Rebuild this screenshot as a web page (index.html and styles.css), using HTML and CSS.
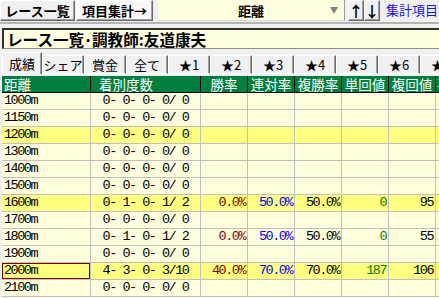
FILE: index.html
```html
<!DOCTYPE html>
<html lang="ja">
<head>
<meta charset="utf-8">
<title>レース一覧</title>
<link rel="stylesheet" href="styles.css">
</head>
<body>
<div class="topbar">
  <div class="btn btn-main">レース一覧</div>
  <div class="btn btn-sub">項目集計→</div>
  <div class="select"><span class="select-text">距離</span><span class="select-arrow"></span></div>
  <div class="btn btn-arrow btn-up">↑</div>
  <div class="btn btn-arrow">↓</div>
  <span class="link">集計項目&gt;</span>
</div>
<div class="title">レース一覧･調教師:友道康夫</div>
<div class="tabs">
  <div class="tab tab-active">成績</div>
  <div class="tab">シェア</div>
  <div class="tab">賞金</div>
  <div class="tab">全て</div>
  <div class="tab">★1</div>
  <div class="tab">★2</div>
  <div class="tab">★3</div>
  <div class="tab">★4</div>
  <div class="tab">★5</div>
  <div class="tab">★6</div>
  <div class="tab">★7</div>
</div>
<div class="grid">
  <div class="row head">
    <div class="c c1">距離</div><div class="c c2">着別度数</div><div class="c">勝率</div><div class="c">連対率</div><div class="c">複勝率</div><div class="c">単回値</div><div class="c">複回値</div><div class="c c8">平均</div>
  </div>
  <div class="row"><div class="c c1 m">1000m</div><div class="c c2 m">0- 0- 0- 0/ 0</div><div class="c"></div><div class="c"></div><div class="c"></div><div class="c"></div><div class="c"></div><div class="c"></div></div>
  <div class="row"><div class="c c1 m">1150m</div><div class="c c2 m">0- 0- 0- 0/ 0</div><div class="c"></div><div class="c"></div><div class="c"></div><div class="c"></div><div class="c"></div><div class="c"></div></div>
  <div class="row hl"><div class="c c1 m">1200m</div><div class="c c2 m">0- 0- 0- 0/ 0</div><div class="c"></div><div class="c"></div><div class="c"></div><div class="c"></div><div class="c"></div><div class="c"></div></div>
  <div class="row"><div class="c c1 m">1300m</div><div class="c c2 m">0- 0- 0- 0/ 0</div><div class="c"></div><div class="c"></div><div class="c"></div><div class="c"></div><div class="c"></div><div class="c"></div></div>
  <div class="row"><div class="c c1 m">1400m</div><div class="c c2 m">0- 0- 0- 0/ 0</div><div class="c"></div><div class="c"></div><div class="c"></div><div class="c"></div><div class="c"></div><div class="c"></div></div>
  <div class="row"><div class="c c1 m">1500m</div><div class="c c2 m">0- 0- 0- 0/ 0</div><div class="c"></div><div class="c"></div><div class="c"></div><div class="c"></div><div class="c"></div><div class="c"></div></div>
  <div class="row hl"><div class="c c1 m">1600m</div><div class="c c2 m">0- 1- 0- 1/ 2</div><div class="c m num red">0.0%</div><div class="c m num blue">50.0%</div><div class="c m num">50.0%</div><div class="c m num green">0</div><div class="c m num">95</div><div class="c"></div></div>
  <div class="row"><div class="c c1 m">1700m</div><div class="c c2 m">0- 0- 0- 0/ 0</div><div class="c"></div><div class="c"></div><div class="c"></div><div class="c"></div><div class="c"></div><div class="c"></div></div>
  <div class="row"><div class="c c1 m">1800m</div><div class="c c2 m">0- 1- 0- 1/ 2</div><div class="c m num red">0.0%</div><div class="c m num blue">50.0%</div><div class="c m num">50.0%</div><div class="c m num green">0</div><div class="c m num">55</div><div class="c"></div></div>
  <div class="row"><div class="c c1 m">1900m</div><div class="c c2 m">0- 0- 0- 0/ 0</div><div class="c"></div><div class="c"></div><div class="c"></div><div class="c"></div><div class="c"></div><div class="c"></div></div>
  <div class="row hl"><div class="c c1 m sel">2000m</div><div class="c c2 m">4- 3- 0- 3/10</div><div class="c m num red">40.0%</div><div class="c m num blue">70.0%</div><div class="c m num">70.0%</div><div class="c m num green">187</div><div class="c m num">106</div><div class="c"></div></div>
  <div class="row"><div class="c c1 m">2100m</div><div class="c c2 m">0- 0- 0- 0/ 0</div><div class="c"></div><div class="c"></div><div class="c"></div><div class="c"></div><div class="c"></div><div class="c"></div></div>
</div>
</body>
</html>
```
FILE: styles.css
```css
html, body {
  margin: 0;
  padding: 0;
}
body {
  width: 439px;
  height: 298px;
  overflow: hidden;
  background: #f0f0f0;
  font-family: "Noto Sans CJK JP", sans-serif;
  font-size: 13px;
  color: #000;
}

/* top bar */
.topbar {
  display: flex;
  align-items: flex-start;
  height: 22px;
  border-bottom: 2px solid #b4b4b4;
  white-space: nowrap;
}
.btn {
  box-sizing: border-box;
  height: 21px;
  display: flex;
  align-items: center;
  justify-content: center;
  border: 1px solid;
  border-color: #ffffff #696969 #696969 #ffffff;
  box-shadow: inset -1px -1px 0 #a0a0a0;
  background: #f0f0f0;
  font-weight: bold;
  font-size: 13px;
  line-height: 1;
  flex: none;
}
.btn-main { width: 75px; }
.btn-sub { width: 77px; margin-left: 1px; background: #f9f9f9; }
.btn-arrow { width: 16px; font-size: 15px; }
.btn-up { margin-left: 3px; }
.select {
  box-sizing: border-box;
  width: 187px;
  height: 21px;
  margin-left: 5px;
  background: #ffffe0;
  border-right: 1px solid #a0a0a0;
  border-bottom: 1px solid #d8d8d8;
  display: flex;
  align-items: center;
  padding-left: 14px;
  flex: none;
}
.select-text {
  flex: 1;
  text-align: center;
  font-weight: bold;
  font-size: 13px;
  line-height: 1;
}
.select-arrow {
  width: 0;
  height: 0;
  border-left: 4px solid transparent;
  border-right: 4px solid transparent;
  border-top: 7px solid #808080;
  margin-right: 6px;
}
.link {
  margin-left: 6px;
  color: #1414f0;
  font-size: 13px;
  line-height: 20px;
}

/* title */
.title {
  box-sizing: border-box;
  margin: 4px 0 0 2px;
  width: 460px;
  height: 21px;
  background: #ffffe0;
  border-top: 2px solid #303030;
  border-left: 2px solid #303030;
  border-bottom: 1px solid #909090;
  padding-left: 3px;
  font-size: 15.6px;
  font-weight: bold;
  line-height: 18px;
  white-space: nowrap;
}

/* tabs */
.tabs {
  display: flex;
  align-items: flex-end;
  height: 22px;
  margin-top: 3px;
  padding-left: 2px;
  white-space: nowrap;
}
.tab {
  box-sizing: border-box;
  flex: none;
  width: 42px;
  height: 19px;
  border-top: 1px solid #ffffff;
  border-left: 1px solid #ffffff;
  border-right: 1px solid #696969;
  border-bottom: 1px solid #ffffff;
  box-shadow: inset -1px 0 0 #a0a0a0;
  text-align: center;
  font-size: 13px;
  line-height: 18px;
  background: #f0f0f0;
}
.tab-active {
  width: 40px;
  height: 22px;
  border-bottom: none;
  line-height: 18px;
  padding-top: 2px;
}

/* grid */
.grid {
  margin: 2px 0 0 2px;
  width: 520px;
}
.row {
  display: grid;
  grid-template-columns: 89px 110px 47px 47px 47px 47px 47px 80px;
  height: 17px;
  box-sizing: border-box;
  border-bottom: 1px solid #c0c0c0;
  background: #ffffde;
}
.row.hl { background: #ffff80; }
.row.head {
  background: #00803e;
  color: #ffffff;
  border-bottom: 1px solid #000000;
}
.c {
  box-sizing: border-box;
  border-right: 1px solid #c0c0c0;
  height: 16px;
  line-height: 16px;
  white-space: pre;
}
.head .c {
  border-right-color: #000000;
  text-align: center;
  font-size: 13.5px;
  line-height: 16px;
}
.head .c1 { text-align: left; padding-left: 2px; }
.head .c2 { text-align: left; padding-left: 8px; }
.head .c8 { text-align: left; padding-left: 1px; }
.m {
  font-family: "Liberation Mono", "Noto Sans CJK JP", monospace;
  font-size: 13.5px;
  letter-spacing: -1.5px;
}
.c1 { padding-left: 2px; }
.c2 { text-align: center; }
.num { text-align: right; padding-right: 2px; }
.red { color: #800000; }
.blue { color: #0000ff; }
.green { color: #008000; }
.sel { box-shadow: inset 0 0 0 1px #800000; }
```
